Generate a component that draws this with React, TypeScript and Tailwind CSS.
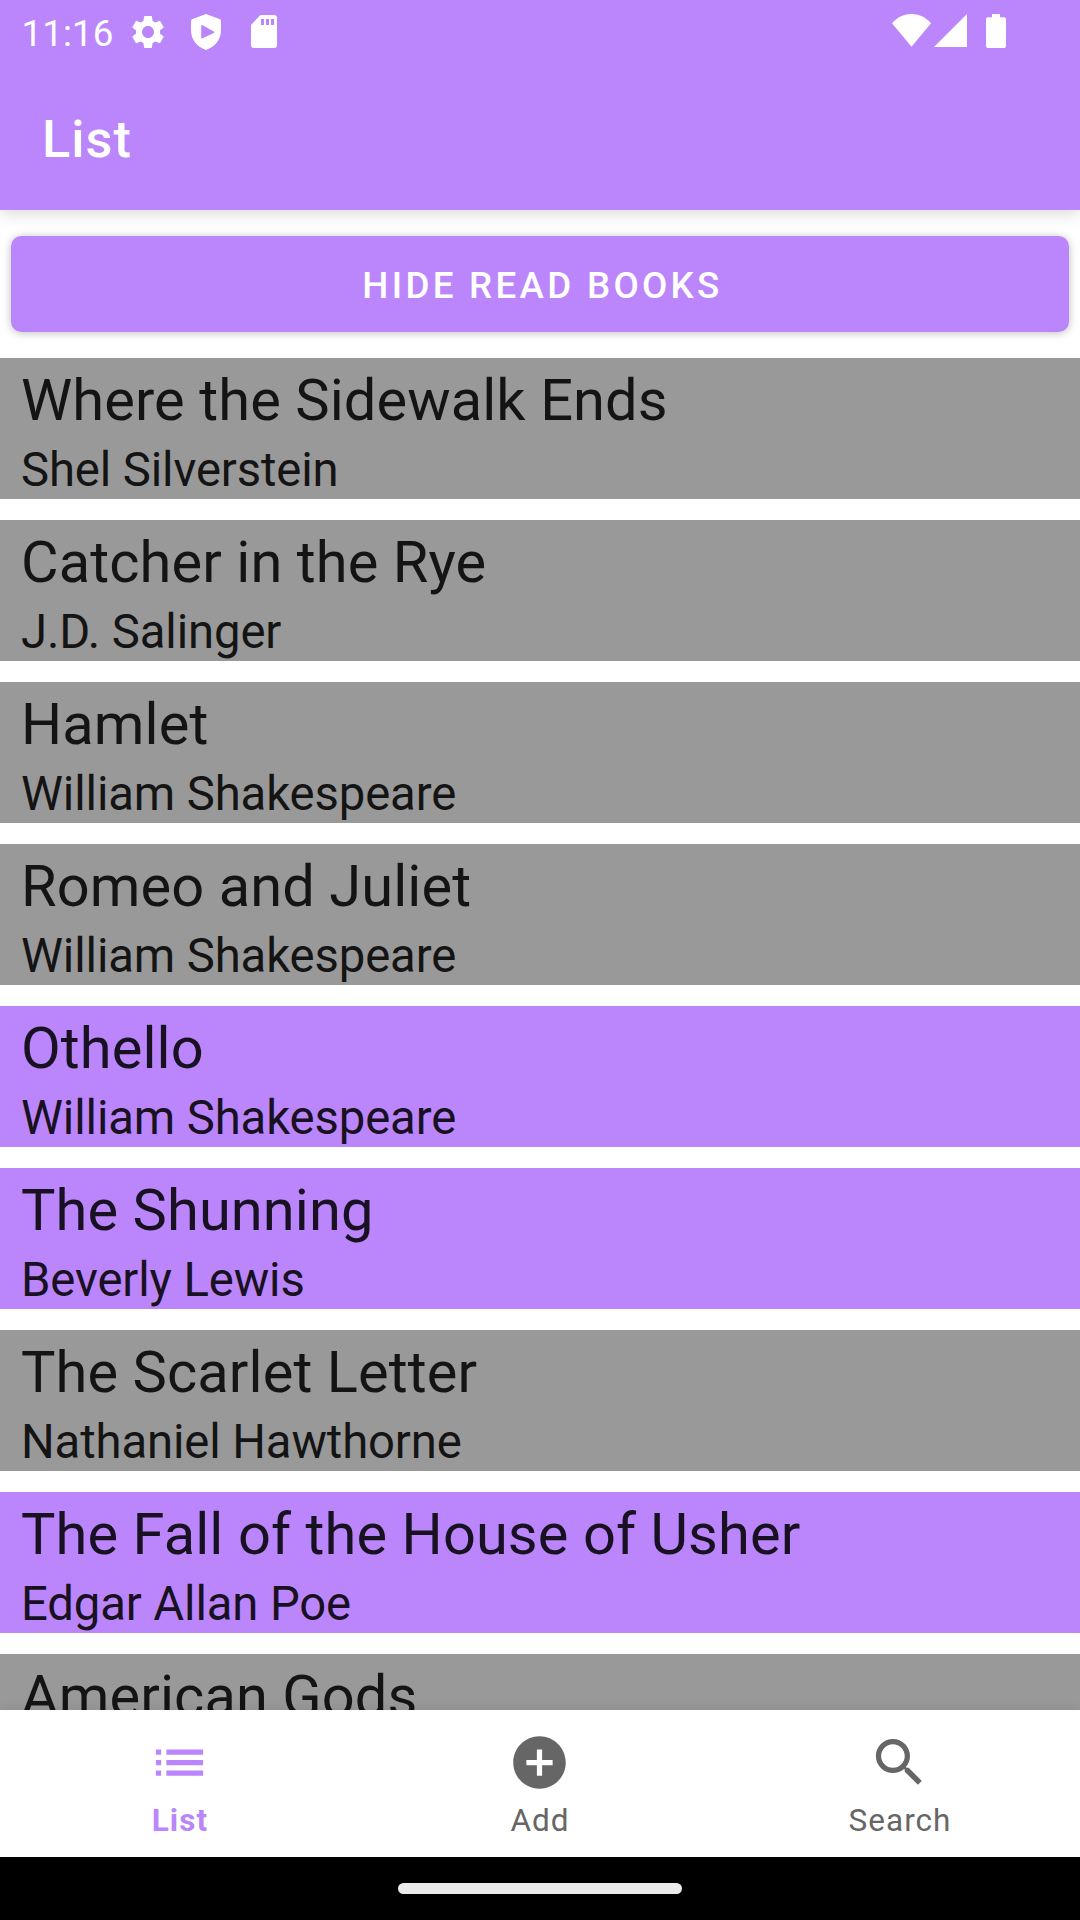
import React from "react";
import { MdSettings } from "react-icons/md";

type Book = { title: string; author?: string; read: boolean };

const books: Book[] = [
  { title: "Where the Sidewalk Ends", author: "Shel Silverstein", read: true },
  { title: "Catcher in the Rye", author: "J.D. Salinger", read: true },
  { title: "Hamlet", author: "William Shakespeare", read: true },
  { title: "Romeo and Juliet", author: "William Shakespeare", read: true },
  { title: "Othello", author: "William Shakespeare", read: false },
  { title: "The Shunning", author: "Beverly Lewis", read: false },
  { title: "The Scarlet Letter", author: "Nathaniel Hawthorne", read: true },
  { title: "The Fall of the House of Usher", author: "Edgar Allan Poe", read: false },
  { title: "American Gods", read: true },
];

function StatusBar() {
  return (
    <div className="flex h-[63px] items-start pl-[21.5px] pr-[74px]">
      <span className="mt-[12px] w-[106.5px] whitespace-nowrap text-[36.75px] leading-[43px] tracking-[0.1px]">11:16</span>
      <MdSettings className="mt-[12px] size-[40px]" />
      <svg className="ml-[23px] mt-[13.7px] h-[36px] w-[30px]" viewBox="0 0 30 36" fill="currentColor">
        <path
          fillRule="evenodd"
          d="M15 0 29 5.2Q30 5.6 30 7V16C30 25.5 24.5 32.5 15 36 5.500 32.500 0 25.500 0 16V7Q0 5.600 1 5.200ZM10.200 12V23.500Q10.200 25 11.600 24.300L22.800 18.900Q24 18.100 22.800 17.400L11.600 11.200Q10.200 10.500 10.200 12Z"
        />
      </svg>
      <svg className="ml-[30px] mt-[15px] h-[33px] w-[26px]" viewBox="0 0 26 33" fill="currentColor">
        <path
          fillRule="evenodd"
          d="M9.500 0H23Q26 0 26 3V30Q26 33 23 33H3Q0 33 0 30V10ZM10 4V10H13V4ZM15 4V10H18V4ZM20 4V10H23V4Z"
        />
      </svg>
      <svg className="ml-auto mt-[14px] h-[33px] w-[39px]" viewBox="0 0 39 33" fill="currentColor">
        <path d="M0 9.300C11-3 28-3 39 9.300L19.500 32.800Z" />
      </svg>
      <svg className="ml-[3px] mt-[14px] h-[33px] w-[33px]" viewBox="0 0 33 33" fill="currentColor">
        <path d="M33 0V33H0Z" />
      </svg>
      <svg className="ml-[19px] mt-[14px] h-[34px] w-[20px]" viewBox="0 0 20 34" fill="currentColor">
        <path d="M6 0H14V3.300H18Q20 3.300 20 5.300V32Q20 34 18 34H2Q0 34 0 32V5.300Q0 3.300 2 3.300H6Z" />
      </svg>
    </div>
  );
}

function BookRow({ book }: { book: Book }) {
  return (
    <li
      className={`h-[141px] shrink-0 whitespace-nowrap pl-[21px] pt-2 ${
        book.read ? "bg-[#999999] text-[#141414]" : "bg-[#bb86fc] text-[#181121]"
      }`}
    >
      <div className="text-[57.75px] leading-[68px] tracking-[0.1px]">{book.title}</div>
      {book.author && <div className="mt-2 text-[47.25px] leading-[56px] tracking-[-0.12px]">{book.author}</div>}
    </li>
  );
}

const tabs = [
  {
    label: "List",
    active: true,
    path: "M3 13h2v-2H3v2zm0 4h2v-2H3v2zm0-8h2V7H3v2zm4 4h14v-2H7v2zm0 4h14v-2H7v2zM7 7v2h14V7H7z",
  },
  {
    label: "Add",
    active: false,
    path: "M12 2C6.48 2 2 6.48 2 12s4.480 10 10 10 10-4.480 10-10S17.520 2 12 2zm5 11h-4v4h-2v-4H7v-2h4V7h2v4h4v2z",
  },
  {
    label: "Search",
    active: false,
    path: "M15.500 14h-.79l-.28-.27C15.410 12.590 16 11.110 16 9.500 16 5.910 13.090 3 9.500 3S3 5.910 3 9.500 5.910 16 9.500 16c1.610 0 3.090-.59 4.230-1.570l.27.28v.79l5 4.990L20.490 19l-4.990-5zm-6 0C7.010 14 5 11.990 5 9.500S7.010 5 9.500 5 14 7.010 14 9.500 11.990 14 9.500 14z",
  },
];

export default function App() {
  return (
    <div className="flex h-[1920px] w-[1080px] flex-col overflow-hidden bg-white font-['Roboto',sans-serif]">
      <header className="z-10 h-[210px] shrink-0 bg-[#bb86fc] text-white shadow-[0_3px_16px_rgba(0,0,0,0.16)]">
        <StatusBar />
        <h1 className="mt-[45px] pl-[42px] text-[52.5px] font-medium leading-[62px] tracking-[0.9px]">List</h1>
      </header>

      <main className="flex min-h-0 flex-1 flex-col overflow-hidden">
        <button className="mx-[11px] mt-[26px] h-[96px] shrink-0 rounded-[10.5px] bg-[#bb86fc] pl-[5px] pt-[3px] text-[36.75px] font-medium leading-[43px] tracking-[0.0893em] text-white shadow-[0_1px_8px_rgba(0,0,0,0.26)]">
          HIDE READ BOOKS
        </button>
        <ul className="mt-[26px] flex flex-col gap-[21px]">
          {books.map((book) => (
            <BookRow key={book.title} book={book} />
          ))}
        </ul>
      </main>

      <nav className="z-10 grid h-[147px] shrink-0 grid-cols-3 bg-white shadow-[0_0_12px_rgba(0,0,0,0.1)]">
        {tabs.map((tab) => (
          <div
            key={tab.label}
            className={`flex flex-col items-center pt-[21px] ${tab.active ? "font-bold text-[#bb86fc]" : "text-[#666666]"}`}
          >
            <svg className="mr-[2px] size-[63px]" viewBox="0 0 24 24" fill="currentColor">
              <path d={tab.path} />
            </svg>
            <span className="mt-[8px] text-[31.5px] leading-[38px] tracking-[0.0333em]">{tab.label}</span>
          </div>
        ))}
      </nav>

      <footer className="z-10 flex h-[63px] shrink-0 justify-center bg-black pt-[26px]">
        <div className="h-[11px] w-[284px] rounded-full bg-[#ebebeb]" />
      </footer>
    </div>
  );
}
